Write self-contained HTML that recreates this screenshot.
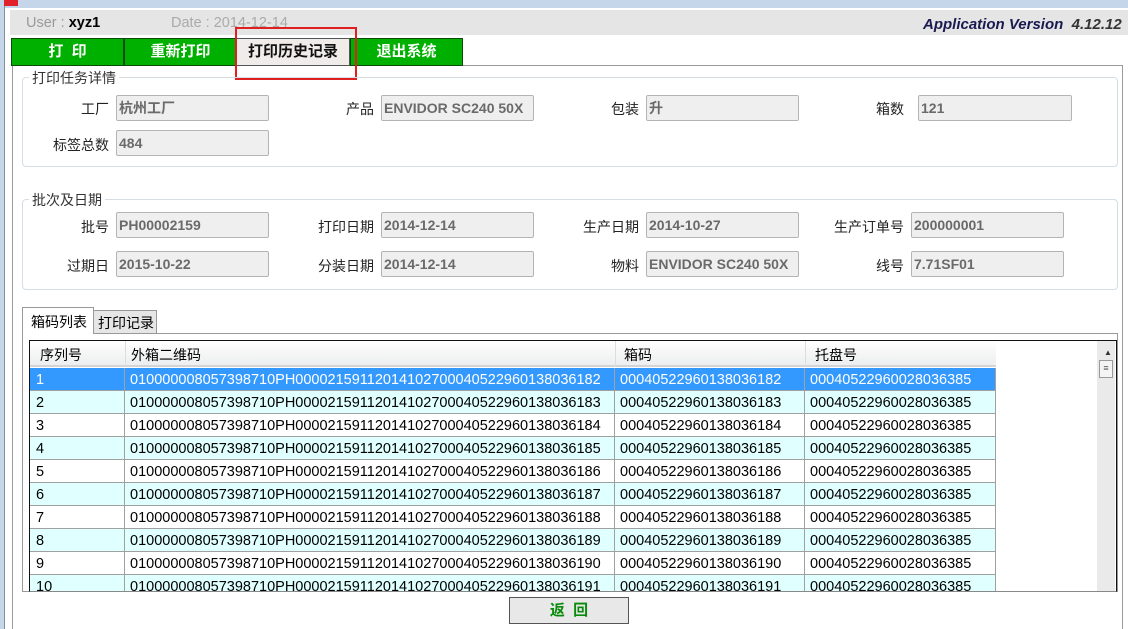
<!DOCTYPE html>
<html><head><meta charset="utf-8"><style>
*{margin:0;padding:0;box-sizing:border-box}
body{width:1128px;height:629px;overflow:hidden;background:#fff;font-family:"Liberation Sans","Noto Sans CJK SC",sans-serif;position:relative;font-size:14px;color:#000}
.a{position:absolute}
.lbl{position:absolute;text-align:right;font-size:14px;color:#222;white-space:nowrap}
.fld{position:absolute;height:26px;background:#efefef;border:1px solid #b4b4b4;border-radius:2px;font-weight:bold;color:#6a6a6a;font-size:14px;line-height:24px;padding-left:2px;white-space:nowrap;overflow:hidden}
.grp{position:absolute;border:1px solid #d5dde5;border-radius:4px}
.gt{position:absolute;background:#fff;padding:0 3px;font-size:14px;color:#333;line-height:16px}
.btn{position:absolute;top:38px;height:28px;background:#00b000;border:1px solid #0a4a0a;color:#fff;font-weight:bold;font-size:15px;text-align:center;line-height:26px}
.row{position:absolute;left:30px;width:966px;height:23px;border-bottom:1px solid #a0a0a0;font-size:14.5px;line-height:24px;white-space:nowrap}
.row span{position:absolute;top:0;height:23px;border-right:1px solid #a0a0a0}
</style></head><body>
<div class="a" style="left:0;top:0;width:1128px;height:8px;background:#c6d6ea"></div>
<div class="a" style="left:0;top:0;width:18px;height:6px;background:#e0202a"></div>
<div class="a" style="left:0;top:0;width:4px;height:629px;background:#c6d6ea"></div>
<div class="a" style="left:4px;top:6px;width:1px;height:623px;background:#8090a0"></div>
<div class="a" style="left:10px;top:10px;width:1118px;height:25px;background:#e5e5e5"></div>
<div class="a" style="left:26px;top:15px;font-size:14.5px;color:#999">User : <b style="color:#000">xyz1</b></div>
<div class="a" style="left:171px;top:15px;font-size:14.5px;color:#aaa">Date : 2014-12-14</div>
<div class="a" style="left:923px;top:16px;font-size:15px;font-weight:bold;font-style:italic;color:#1a1a50">Application Version&nbsp; <span style="color:#333">4.12.12</span></div>
<div class="a" style="left:12px;top:65px;width:1111px;height:564px;border-left:1px solid #9a9a9a;border-top:1px solid #9a9a9a;border-right:1px solid #9a9a9a"></div>
<div class="btn" style="left:11px;width:113px">打&nbsp;&nbsp;印</div>
<div class="btn" style="left:124px;width:113px">重新打印</div>
<div class="btn" style="left:236px;width:114px;background:#f0ecea;color:#111;border-color:#555;height:28px">打印历史记录</div>
<div class="btn" style="left:350px;width:113px">退出系统</div>
<div class="a" style="left:235px;top:27px;width:122px;height:53px;border:2px solid #e02020"></div>

<div class="grp" style="left:22px;top:77px;width:1096px;height:90px"></div>
<div class="gt" style="left:29px;top:70px">打印任务详情</div>
<div class="grp" style="left:22px;top:199px;width:1096px;height:91px"></div>
<div class="gt" style="left:29px;top:192px">批次及日期</div>

<div class="lbl" style="right:1019px;top:99px">工厂</div><div class="fld" style="left:116px;top:95px;width:153px">杭州工厂</div>
<div class="lbl" style="right:754px;top:99px">产品</div><div class="fld" style="left:381px;top:95px;width:153px">ENVIDOR SC240 50X</div>
<div class="lbl" style="right:489px;top:99px">包装</div><div class="fld" style="left:646px;top:95px;width:153px">升</div>
<div class="lbl" style="right:224px;top:99px">箱数</div><div class="fld" style="left:918px;top:95px;width:154px">121</div>
<div class="lbl" style="right:1019px;top:135px">标签总数</div><div class="fld" style="left:116px;top:130px;width:153px">484</div>

<div class="lbl" style="right:1019px;top:217px">批号</div><div class="fld" style="left:116px;top:212px;width:153px">PH00002159</div>
<div class="lbl" style="right:754px;top:217px">打印日期</div><div class="fld" style="left:381px;top:212px;width:153px">2014-12-14</div>
<div class="lbl" style="right:489px;top:217px">生产日期</div><div class="fld" style="left:646px;top:212px;width:153px">2014-10-27</div>
<div class="lbl" style="right:224px;top:217px">生产订单号</div><div class="fld" style="left:911px;top:212px;width:153px">200000001</div>
<div class="lbl" style="right:1019px;top:256px">过期日</div><div class="fld" style="left:116px;top:251px;width:153px">2015-10-22</div>
<div class="lbl" style="right:754px;top:256px">分装日期</div><div class="fld" style="left:381px;top:251px;width:153px">2014-12-14</div>
<div class="lbl" style="right:489px;top:256px">物料</div><div class="fld" style="left:646px;top:251px;width:153px">ENVIDOR SC240 50X</div>
<div class="lbl" style="right:224px;top:256px">线号</div><div class="fld" style="left:911px;top:251px;width:153px">7.71SF01</div>

<div class="a" style="left:22px;top:333px;width:1096px;height:259px;border:1px solid #999"></div>
<div class="a" style="left:22px;top:307px;width:72px;height:27px;background:#fff;border:1px solid #999;border-bottom:none;font-size:14px;line-height:28px;padding-left:8px">箱码列表</div>
<div class="a" style="left:93px;top:310px;width:64px;height:24px;background:#e6e6e6;border:1px solid #999;font-size:14px;line-height:24px;padding-left:4px">打印记录</div>

<div class="a" style="left:29px;top:340px;width:1088px;height:252px;border:1px solid #111;border-bottom-color:#888;overflow:hidden;background:#fff">
<div class="a" style="left:0;top:0;width:966px;height:26px;background:linear-gradient(#fff,#f6f6f6 50%,#eceef0);border-bottom:2px solid #d4d4d4;font-size:14px;line-height:28px">
<span class="a" style="left:10px">序列号</span><span class="a" style="left:95px;top:0;height:26px;border-left:1px solid #ddd;padding-left:5px">外箱二维码</span><span class="a" style="left:585px;height:26px;border-left:1px solid #ddd;padding-left:8px">箱码</span><span class="a" style="left:775px;height:26px;border-left:1px solid #ddd;padding-left:9px">托盘号</span></div>
<div class="a" style="right:1px;top:0;width:18px;height:252px;background:#eaeaea"></div>
<div class="a" style="right:2px;top:7px;width:12px;font-size:8px;color:#333;text-align:center">▲</div>
<div class="a" style="right:3px;top:19px;width:14px;height:18px;border:1px solid #999;background:#f4f4f4;font-size:9px;line-height:14px;text-align:center;color:#555">≡</div>
</div>

<div class="row" style="top:368px;background:#3399ff;color:#fff"><span style="left:0;width:95px;padding-left:6px">1</span><span style="left:95px;width:490px;padding-left:5px">010000008057398710PH00002159112014102700040522960138036182</span><span style="left:585px;width:190px;padding-left:5px">00040522960138036182</span><span style="left:775px;width:191px;padding-left:5px">00040522960028036385</span></div>
<div class="row" style="top:391px;background:#e0ffff"><span style="left:0;width:95px;padding-left:6px">2</span><span style="left:95px;width:490px;padding-left:5px">010000008057398710PH00002159112014102700040522960138036183</span><span style="left:585px;width:190px;padding-left:5px">00040522960138036183</span><span style="left:775px;width:191px;padding-left:5px">00040522960028036385</span></div>
<div class="row" style="top:414px;background:#fff"><span style="left:0;width:95px;padding-left:6px">3</span><span style="left:95px;width:490px;padding-left:5px">010000008057398710PH00002159112014102700040522960138036184</span><span style="left:585px;width:190px;padding-left:5px">00040522960138036184</span><span style="left:775px;width:191px;padding-left:5px">00040522960028036385</span></div>
<div class="row" style="top:437px;background:#e0ffff"><span style="left:0;width:95px;padding-left:6px">4</span><span style="left:95px;width:490px;padding-left:5px">010000008057398710PH00002159112014102700040522960138036185</span><span style="left:585px;width:190px;padding-left:5px">00040522960138036185</span><span style="left:775px;width:191px;padding-left:5px">00040522960028036385</span></div>
<div class="row" style="top:460px;background:#fff"><span style="left:0;width:95px;padding-left:6px">5</span><span style="left:95px;width:490px;padding-left:5px">010000008057398710PH00002159112014102700040522960138036186</span><span style="left:585px;width:190px;padding-left:5px">00040522960138036186</span><span style="left:775px;width:191px;padding-left:5px">00040522960028036385</span></div>
<div class="row" style="top:483px;background:#e0ffff"><span style="left:0;width:95px;padding-left:6px">6</span><span style="left:95px;width:490px;padding-left:5px">010000008057398710PH00002159112014102700040522960138036187</span><span style="left:585px;width:190px;padding-left:5px">00040522960138036187</span><span style="left:775px;width:191px;padding-left:5px">00040522960028036385</span></div>
<div class="row" style="top:506px;background:#fff"><span style="left:0;width:95px;padding-left:6px">7</span><span style="left:95px;width:490px;padding-left:5px">010000008057398710PH00002159112014102700040522960138036188</span><span style="left:585px;width:190px;padding-left:5px">00040522960138036188</span><span style="left:775px;width:191px;padding-left:5px">00040522960028036385</span></div>
<div class="row" style="top:529px;background:#e0ffff"><span style="left:0;width:95px;padding-left:6px">8</span><span style="left:95px;width:490px;padding-left:5px">010000008057398710PH00002159112014102700040522960138036189</span><span style="left:585px;width:190px;padding-left:5px">00040522960138036189</span><span style="left:775px;width:191px;padding-left:5px">00040522960028036385</span></div>
<div class="row" style="top:552px;background:#fff"><span style="left:0;width:95px;padding-left:6px">9</span><span style="left:95px;width:490px;padding-left:5px">010000008057398710PH00002159112014102700040522960138036190</span><span style="left:585px;width:190px;padding-left:5px">00040522960138036190</span><span style="left:775px;width:191px;padding-left:5px">00040522960028036385</span></div>
<div class="a" style="left:30px;top:575px;width:966px;height:16px;overflow:hidden"><div class="row" style="left:0;top:0;background:#e0ffff;border-bottom:none"><span style="left:0;width:95px;padding-left:6px">10</span><span style="left:95px;width:490px;padding-left:5px">010000008057398710PH00002159112014102700040522960138036191</span><span style="left:585px;width:190px;padding-left:5px">00040522960138036191</span><span style="left:775px;width:191px;padding-left:5px">00040522960028036385</span></div></div>

<div class="a" style="left:509px;top:597px;width:120px;height:27px;background:#e8e8e8;border:1px solid #555;text-align:center;font-weight:bold;color:#0a8a0a;font-size:15px;line-height:25px">返&nbsp;&nbsp;回</div>
</body></html>
